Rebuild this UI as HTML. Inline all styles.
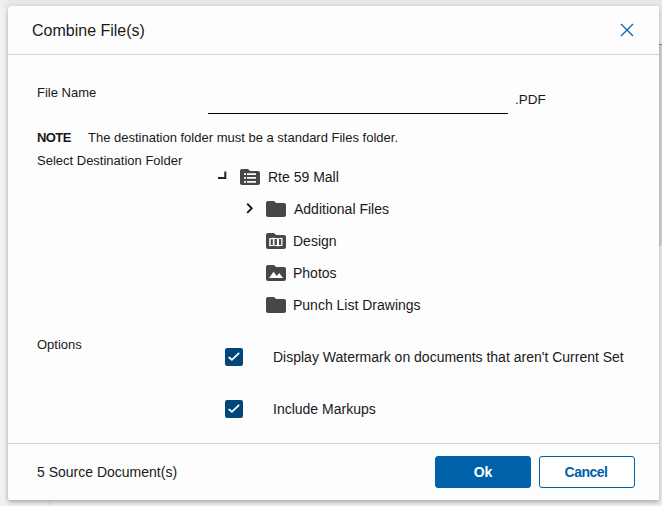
<!DOCTYPE html>
<html>
<head>
<meta charset="utf-8">
<style>
html,body{margin:0;padding:0;}
body{width:662px;height:506px;overflow:hidden;position:relative;background:#f1f1f1;font-family:"Liberation Sans",sans-serif;color:#191919;}
.bgstrip{position:absolute;left:659px;top:44px;width:3px;height:201px;background:#d0d8e1;border-top:1px solid #8a8a8a;}
.dlg{position:absolute;left:8px;top:6px;width:651px;height:494px;background:#fdfdfd;border-radius:4px 0 0 2px;box-shadow:0 2px 5px rgba(0,0,0,.33);}
.t{position:absolute;white-space:nowrap;line-height:1;}
.hr{position:absolute;left:0;width:651px;height:1px;background:#d4d4d4;}
svg{position:absolute;overflow:visible;}
.btn{position:absolute;top:450px;width:96px;height:32px;box-sizing:border-box;border-radius:3px;font-weight:bold;font-size:14px;text-align:center;line-height:30px;}
</style>
</head>
<body>
<div style="position:absolute;left:0;top:0;width:662px;height:8px;background:linear-gradient(to right,#f1f1f1 0px,#e8e8e8 9px);"></div>
<div class="bgstrip"></div>
<div style="position:absolute;left:49px;top:498px;width:1px;height:8px;background:rgba(0,0,0,.07)"></div>
<div class="dlg">
  <div class="t" style="left:24px;top:17px;font-size:16px;">Combine File(s)</div>
  <svg style="left:612px;top:17px" width="14" height="14" viewBox="0 0 14 14"><path d="M1 1L13 13M13 1L1 13" stroke="#0a60b0" stroke-width="1.3" fill="none"/></svg>
  <div class="hr" style="top:48px"></div>

  <div class="t" style="left:29px;top:80px;font-size:13px;">File Name</div>
  <div style="position:absolute;left:200px;top:107px;width:300px;height:1px;background:#000;"></div>
  <div class="t" style="left:507px;top:87px;font-size:13.5px;">.PDF</div>

  <div class="t" style="left:29px;top:125px;font-size:13px;font-weight:bold;letter-spacing:-0.6px;">NOTE</div>
  <div class="t" style="left:80px;top:125px;font-size:13px;">The destination folder must be a standard Files folder.</div>
  <div class="t" style="left:29px;top:148px;font-size:13px;">Select Destination Folder</div>

  <!-- tree -->
  <svg style="left:210px;top:165px" width="10" height="10"><path d="M0 7H8.3M7.3 0.5V8" stroke="#222" stroke-width="2" fill="none"/></svg>
  <svg style="left:230px;top:159px" width="24" height="24" viewBox="0 0 24 24"><path d="M10 4H4c-1.1 0-2 .9-2 2v12c0 1.1.9 2 2 2h16c1.1 0 2-.9 2-2V8c0-1.1-.9-2-2-2h-8l-2-2z" fill="#474747"/><path d="M6 8.2h2v1.75H6zM9 8.2h9v1.75H9zM6 12.1h2v1.75H6zM9 12.1h9v1.75H9zM6 16.05h2v1.75H6zM9 16.05h9v1.75H9z" fill="#fafafa"/></svg>
  <div class="t" style="left:260px;top:164px;font-size:14px;">Rte 59 Mall</div>

  <svg style="left:238px;top:197px" width="8" height="12"><path d="M1.2 0.7L5.7 5.3L1.2 9.9" stroke="#161616" stroke-width="1.9" fill="none"/></svg>
  <svg style="left:256px;top:191px" width="24" height="24" viewBox="0 0 24 24"><path d="M10 4H4c-1.1 0-2 .9-2 2v12c0 1.1.9 2 2 2h16c1.1 0 2-.9 2-2V8c0-1.1-.9-2-2-2h-8l-2-2z" fill="#474747"/></svg>
  <div class="t" style="left:286px;top:196px;font-size:14px;">Additional Files</div>

  <svg style="left:256px;top:223px" width="24" height="24" viewBox="0 0 24 24"><path d="M10 4H4c-1.1 0-2 .9-2 2v12c0 1.1.9 2 2 2h16c1.1 0 2-.9 2-2V8c0-1.1-.9-2-2-2h-8l-2-2z" fill="#474747"/><path d="M5.2 9.3L9.8 8.7 14 9.3 18.5 8.7V16.7L14 17.3 9.8 16.7 5.2 17.3z" fill="#fff"/><path d="M6.7 10.3h2.1v5.6H6.7zM10.5 10.1h2.4v5.8h-2.4zM15 10.1h2.2v5.8H15z" fill="#474747"/></svg>
  <div class="t" style="left:285px;top:228px;font-size:14px;">Design</div>

  <svg style="left:256px;top:255px" width="24" height="24" viewBox="0 0 24 24"><path d="M10 4H4c-1.1 0-2 .9-2 2v12c0 1.1.9 2 2 2h16c1.1 0 2-.9 2-2V8c0-1.1-.9-2-2-2h-8l-2-2z" fill="#474747"/><path d="M5 17L9.6 10.8 12.7 15l2.5-3 3.8 5z" fill="#fff"/></svg>
  <div class="t" style="left:285px;top:260px;font-size:14px;">Photos</div>

  <svg style="left:256px;top:287px" width="24" height="24" viewBox="0 0 24 24"><path d="M10 4H4c-1.1 0-2 .9-2 2v12c0 1.1.9 2 2 2h16c1.1 0 2-.9 2-2V8c0-1.1-.9-2-2-2h-8l-2-2z" fill="#474747"/></svg>
  <div class="t" style="left:285px;top:292px;font-size:14px;">Punch List Drawings</div>

  <div class="t" style="left:29px;top:332px;font-size:13px;">Options</div>

  <svg style="left:214px;top:339px" width="24" height="24" viewBox="0 0 24 24"><rect x="3" y="3" width="18" height="18" rx="2.2" fill="#014678"/><path d="M6.7 12.1L9.9 14.8 17.2 7.9" stroke="#fff" stroke-width="1.8" fill="none"/></svg>
  <div class="t" style="left:265px;top:344px;font-size:14px;">Display Watermark on documents that aren't Current Set</div>

  <svg style="left:214px;top:391px" width="24" height="24" viewBox="0 0 24 24"><rect x="3" y="3" width="18" height="18" rx="2.2" fill="#014678"/><path d="M6.7 12.1L9.9 14.8 17.2 7.9" stroke="#fff" stroke-width="1.8" fill="none"/></svg>
  <div class="t" style="left:265px;top:396px;font-size:14px;">Include Markups</div>

  <div class="hr" style="top:437px"></div>
  <div class="t" style="left:29px;top:459px;font-size:14px;">5 Source Document(s)</div>
  <div class="btn" style="left:427px;background:#0061a9;border:1px solid #0061a9;color:#fff;">Ok</div>
  <div class="btn" style="left:531px;background:#fff;color:#0061a9;border:1px solid #0061a9;letter-spacing:-0.5px;padding-right:2px;">Cancel</div>
</div>
</body>
</html>
